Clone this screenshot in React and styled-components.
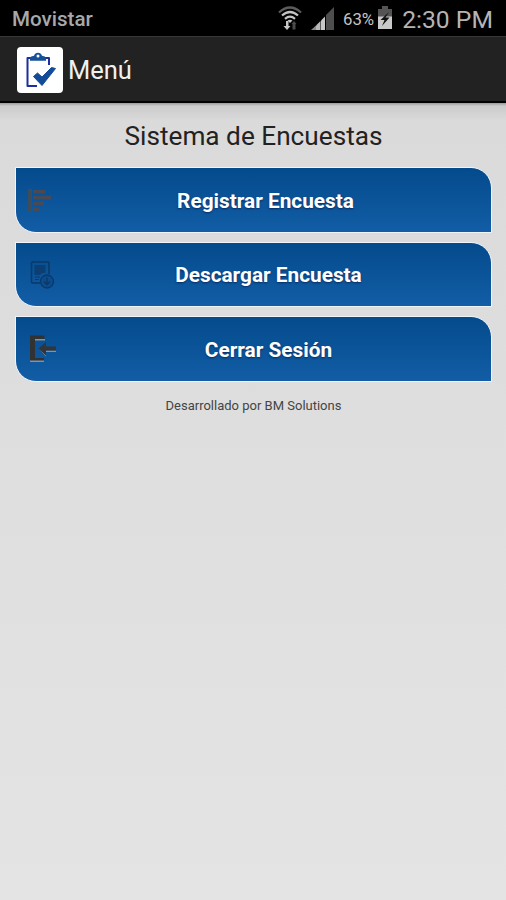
import React from 'react';
import styled, { createGlobalStyle } from 'styled-components';

const WifiIcon = () => (
    <svg width="24" height="26" viewBox="0 0 24 26" fill="none">
        <path d="M1 7.5Q12-2.5 23 7.5" stroke="#5c5c5c" strokeWidth="2.2" />
        <path d="M4 10.5Q12 3.5 20 10.5" stroke="#c4c4c4" strokeWidth="2.2" />
        <path d="M7 13.8Q12 9.5 17 13.8" stroke="#c4c4c4" strokeWidth="2.2" />
        <path d="M9.5 15.5Q12 14 14.5 15.5L12 18Z" fill="#c4c4c4" />
        <path d="M8 16v5H5.5l3.5 4 3.5-4h-2v-5Z" fill="#c9c9c9" />
        <path d="M14.5 24.500v-5.500h-1l2.500-3 2.500 3h-1v5.500Z" fill="#4a4a4a" />
    </svg>
);

const SignalIcon = () => (
    <svg width="23" height="23" viewBox="0 0 23 23">
        <path d="M0 23L5 18.500V23Z" fill="#8c8c8c" />
        <path d="M5 23v-4.500L9.500 14v9Z" fill="#b8b8b8" />
        <path d="M10 23V13.500L14 9.500V23Z" fill="#c9c9c9" />
        <path d="M15 23V8L23 0v23Z" fill="#4e4e4e" />
    </svg>
);

const BatteryIcon = () => (
    <svg width="14" height="23" viewBox="0 0 14 23">
        <path d="M4 0h6v3h4v8H0V3h4Z" fill="#545454" />
        <path d="M0 10.500h14V23H0Z" fill="#c9c9c9" />
        <path d="M11 6L2.500 14h4L4 20l7.500-8.500h-4Z" fill="#111" />
    </svg>
);

const ClipboardIcon = () => (
    <svg width="46" height="46" viewBox="0 0 46 46" fill="none">
        <path d="M14 11H10.500V39H20M28 11h4v7" stroke="#1d2fa0" strokeWidth="2" strokeLinejoin="round" />
        <path d="M13 13.700V10.700Q13.500 9 17 8.700Q18 5.700 21 5.700T25 8.700Q28.500 9 29 10.700V13.700Z" fill="#174f99" />
        <circle cx="21" cy="9" r="1.500" fill="#fff" />
        <path d="M16.500 29.500L20.500 26L25 30L34.500 20.500L38.500 21.500L25 38.500Z" fill="#124b98" stroke="#124b98" strokeLinejoin="round" />
    </svg>
);

const ListIcon = () => (
    <svg width="26" height="28" viewBox="0 0 26 28" fill="#484b55">
        <path d="M0 3h4v22H0z" fill="#3d4d5c" />
        <path d="M5 4h12v3.500H5zM5 10h18v3.500H5zM5 15.500h11V19H5zM5 21.500h6V25H5z" />
    </svg>
);

const DownloadIcon = () => (
    <svg width="32" height="28" viewBox="0 0 32 28" fill="none" stroke="#0b3866">
        <path d="M12 22H4.500Q3.500 22 3.500 21V2Q3.500 1 4.500 1H20Q21 1 21 2V13" strokeWidth="1.500" />
        <path d="M6.500 4h11v8h-3l-3 2h-5Z" fill="#0b3e72" stroke="none" />
        <path d="M7 16h5M7 18.500h4" strokeWidth="1" />
        <circle cx="19" cy="20.500" r="6.500" fill="#0d4c8c" strokeWidth="1.300" />
        <path d="M19 16.500v7M16 20.500l3 3 3-3" strokeWidth="1.300" />
    </svg>
);

const ExitIcon = () => (
    <svg width="32" height="28" viewBox="0 0 32 28">
        <path d="M2 25h14v2H2zM7 4h10v1.500H7z" fill="#8a9199" />
        <path d="M2 0.500h14.500V4H7v19h9v2.500H2Z" fill="#303234" />
        <path d="M17 15.500h11V17H17zM11 14l7 6v1.500Z" fill="#8a9199" />
        <path d="M10.500 13.500l7.500-6.500v4.500h10v4H18v5Z" fill="#343536" />
    </svg>
);

const menuItems = [
    { label: 'Registrar Encuesta', icon: <ListIcon /> },
    { label: 'Descargar Encuesta', icon: <DownloadIcon /> },
    { label: 'Cerrar Sesión', icon: <ExitIcon /> },
];

const App = () => {
    return (
        <Screen>
            <GlobalStyle />
            <StatusBar>
                <Carrier>Movistar</Carrier>
                <StatusIcons>
                    <WifiIcon />
                    <Signal>
                        <SignalIcon />
                    </Signal>
                    <Battery>
                        <BatteryLevel>63%</BatteryLevel>
                        <BatteryIcon />
                    </Battery>
                    <Clock>2:30 PM</Clock>
                </StatusIcons>
            </StatusBar>
            <ActionBar>
                <AppLogo>
                    <ClipboardIcon />
                </AppLogo>
                <ActionTitle>Menú</ActionTitle>
            </ActionBar>
            <Content>
                <Heading>Sistema de Encuestas</Heading>
                <Menu>
                    {menuItems.map((item) => (
                        <MenuButton key={item.label}>
                            {item.icon}
                            <MenuLabel>{item.label}</MenuLabel>
                        </MenuButton>
                    ))}
                </Menu>
                <Credits>Desarrollado por BM Solutions</Credits>
            </Content>
        </Screen>
    );
};

const GlobalStyle = createGlobalStyle`
    * {
        box-sizing: border-box;
    }

    body {
        margin: 0;
        font-family: Roboto, 'Liberation Sans', sans-serif;
    }

    svg {
        display: block;
        flex-shrink: 0;
    }
`;

const Screen = styled.div`
    display: flex;
    flex-direction: column;
    height: 900px;
    overflow: hidden;
`;

const StatusBar = styled.header`
    display: flex;
    justify-content: space-between;
    height: 36px;
    padding: 0 13px 0 12px;
    background: #000;
    color: #b4b4b4;
`;

const Carrier = styled.span`
    font-size: 20.6px;
    font-weight: 500;
    line-height: 38px;
    color: #a8a8a8;
`;

const StatusIcons = styled.div`
    display: flex;
    align-items: flex-start;
    padding-top: 5px;
    gap: 9px;
`;

const Signal = styled.div`
    padding-top: 2px;
`;

const Battery = styled.div`
    display: flex;
    align-items: flex-start;
    gap: 4px;
    padding: 1px 1px 0 0;
`;

const BatteryLevel = styled.span`
    font-size: 16.8px;
    line-height: 26px;
    color: #c4c4c4;
`;

const Clock = styled.span`
    font-size: 24.7px;
    line-height: 30px;
`;

const ActionBar = styled.div`
    display: flex;
    align-items: center;
    gap: 5px;
    height: 67px;
    padding: 1px 18px 0 17px;
    background: #222;
    border-top: 1px solid #383838;
    border-bottom: 2px solid #000;
`;

const AppLogo = styled.div`
    width: 46px;
    height: 46px;
    border-radius: 4px;
    background: #fff;
`;

const ActionTitle = styled.h1`
    margin: 0;
    padding-top: 1px;
    font-size: 25.5px;
    font-weight: 400;
    line-height: 32px;
    color: #f0f0f0;
`;

const Content = styled.main`
    display: flex;
    flex: 1;
    flex-direction: column;
    padding: 16px 14px 0 15px;
    background:
        linear-gradient(rgba(0, 0, 0, 0.3), rgba(0, 0, 0, 0.07) 3px, transparent 18px),
        linear-gradient(#dadada, #e4e4e4);
`;

const Heading = styled.h2`
    margin: 0;
    font-size: 26.2px;
    font-weight: 400;
    line-height: 34px;
    text-align: center;
    color: #222;
`;

const Menu = styled.nav`
    display: flex;
    flex-direction: column;
    gap: 9px;
    margin-top: 14px;
`;

const MenuButton = styled.button`
    display: flex;
    align-items: center;
    height: 65.5px;
    padding: 1px 14px 0 12px;
    border: 1px solid #eef4fa;
    border-radius: 0 21px 0 21px;
    background: linear-gradient(#044b8c, #125da6);
    color: #fff;
    font-family: inherit;
`;

const MenuLabel = styled.span`
    flex: 1;
    padding-top: 1px;
    font-size: 20.8px;
    font-weight: 700;
    text-align: center;
    text-shadow: 0 1px 2px rgba(0, 0, 40, 0.5);
`;

const Credits = styled.footer`
    margin-top: 15px;
    font-size: 13px;
    line-height: 18px;
    text-align: center;
    color: #444;
`;

export default App;
